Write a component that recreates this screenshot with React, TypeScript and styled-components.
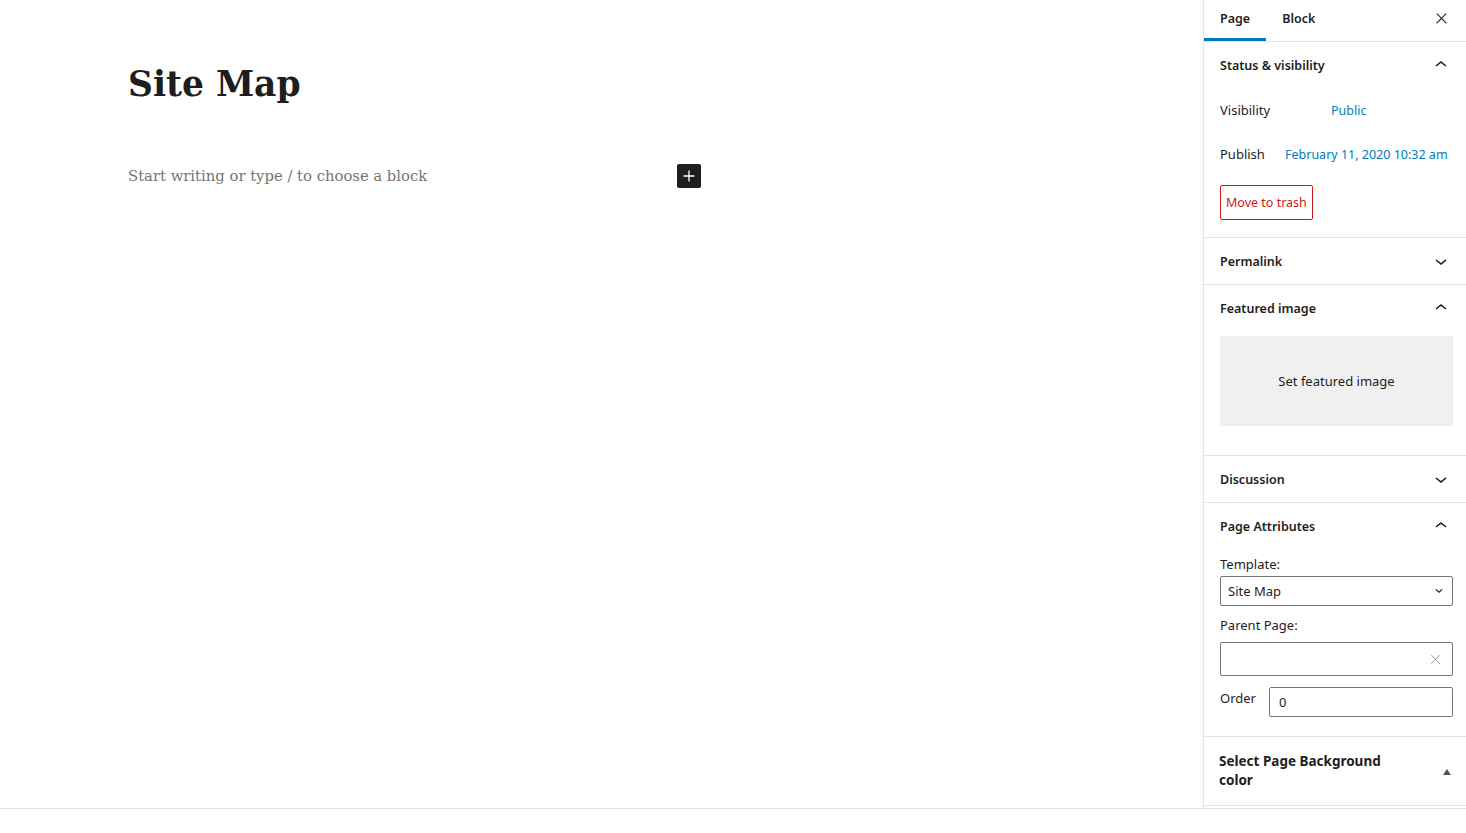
import React from 'react';
import styled, { createGlobalStyle } from 'styled-components';

const GlobalStyle = createGlobalStyle`
  html, body {
    margin: 0;
    padding: 0;
    background: #fff;
    color: #1e1e1e;
  }
  * { box-sizing: border-box; }
`;

const uiFont = `"Noto Sans", "Open Sans", sans-serif`;
const serifFont = `"DejaVu Serif", "Liberation Serif", serif`;

const ChevronUp = () => (
  <svg width="24" height="24" viewBox="0 0 24 24">
    <path d="M6.5 12.4L12 8l5.5 4.4-.9 1.2L12 10l-4.6 3.6-.9-1.2z" fill="#1e1e1e" />
  </svg>
);

const ChevronDown = () => (
  <svg width="24" height="24" viewBox="0 0 24 24">
    <path d="M17.5 11.6L12 16l-5.5-4.4.9-1.2L12 14l4.6-3.7.9 1.3z" fill="#1e1e1e" />
  </svg>
);

const CloseIcon = ({ size = 24, color = '#1e1e1e' }: { size?: number; color?: string }) => (
  <svg width={size} height={size} viewBox="0 0 24 24">
    <path
      d="M13 11.8l6.1-6.3-1-1-6.1 6.2-6.1-6.2-1 1 6.1 6.3-6.5 6.7 1 1 6.5-6.6 6.5 6.6 1-1z"
      fill={color}
    />
  </svg>
);

function App() {
  return (
    <>
      <GlobalStyle />
      <Layout>
        <Editor>
          <Column>
            <Title>Site Map</Title>
            <BlockRow>
              <Placeholder>Start writing or type / to choose a block</Placeholder>
              <InserterButton aria-label="Add block">
                <svg width="16" height="16" viewBox="0 0 16 16">
                  <path d="M7.35 2.5h1.3v4.85h4.85v1.3H8.65v4.85h-1.3V8.65H2.5v-1.3h4.85z" fill="#fff" />
                </svg>
              </InserterButton>
            </BlockRow>
          </Column>
        </Editor>

        <Sidebar>
          <Tabs>
            <Tab $active>Page</Tab>
            <Tab>Block</Tab>
            <CloseButton aria-label="Close settings">
              <CloseIcon size={17} />
            </CloseButton>
          </Tabs>

          <Panel>
            <PanelHeader>
              <span>Status &amp; visibility</span>
              <ChevronUp />
            </PanelHeader>
            <PanelBody $bottom={17}>
              <InfoRow>
                <InfoLabel $width={111}>Visibility</InfoLabel>
                <InfoLink>Public</InfoLink>
              </InfoRow>
              <InfoRow>
                <InfoLabel $width={65}>Publish</InfoLabel>
                <InfoLink>February 11, 2020 10:32 am</InfoLink>
              </InfoRow>
              <TrashButton>Move to trash</TrashButton>
            </PanelBody>
          </Panel>

          <Panel>
            <PanelHeader>
              <span>Permalink</span>
              <ChevronDown />
            </PanelHeader>
          </Panel>

          <Panel>
            <PanelHeader>
              <span>Featured image</span>
              <ChevronUp />
            </PanelHeader>
            <PanelBody $bottom={29}>
              <FeaturedBox>Set featured image</FeaturedBox>
            </PanelBody>
          </Panel>

          <Panel>
            <PanelHeader>
              <span>Discussion</span>
              <ChevronDown />
            </PanelHeader>
          </Panel>

          <Panel>
            <PanelHeader>
              <span>Page Attributes</span>
              <ChevronUp />
            </PanelHeader>
            <PanelBody $bottom={19}>
              <FieldLabel $top={6} $bottom={3}>Template:</FieldLabel>
              <SelectBox>
                <span>Site Map</span>
                <svg width="10" height="10" viewBox="0 0 10 10">
                  <path d="M1.8 3.4L5 6.3l3.2-2.9" stroke="#1e1e1e" strokeWidth="1.2" fill="none" />
                </svg>
              </SelectBox>
              <FieldLabel $top={10} $bottom={8}>Parent Page:</FieldLabel>
              <ComboBox>
                <CloseIcon size={15} color="#a7aaad" />
              </ComboBox>
              <OrderRow>
                <FieldLabel $top={2}>Order</FieldLabel>
                <NumberBox>0</NumberBox>
              </OrderRow>
            </PanelBody>
          </Panel>

          <Panel>
            <BigHeader>
              <BigTitle>Select Page Background color</BigTitle>
              <Triangle />
            </BigHeader>
          </Panel>
        </Sidebar>
      </Layout>
    </>
  );
}

const Layout = styled.div`
  display: flex;
  height: 809px;
  border-bottom: 1px solid #e2e4e7;
`;

const Editor = styled.main`
  flex: 1;
  padding: 54px 0 0 128px;
`;

const Column = styled.div`
  width: 573px;
`;

const Title = styled.h1`
  margin: 0;
  font-family: ${serifFont};
  font-weight: 700;
  font-size: 34.5px;
  line-height: 60px;
  color: #1e1e1e;
`;

const BlockRow = styled.div`
  display: flex;
  align-items: center;
  justify-content: space-between;
  margin-top: 50px;
`;

const Placeholder = styled.p`
  margin: 0;
  font-family: ${serifFont};
  font-size: 14.8px;
  line-height: 24px;
  color: #757575;
`;

const InserterButton = styled.button`
  width: 24px;
  height: 24px;
  padding: 0;
  border: 0;
  border-radius: 2px;
  background: #1e1e1e;
  display: flex;
  align-items: center;
  justify-content: center;
`;

const Sidebar = styled.aside`
  width: 263px;
  border-left: 1px solid #e2e4e7;
  font-family: ${uiFont};
  font-size: 13px;
  color: #1e1e1e;
  display: flex;
  flex-direction: column;
`;

const Tabs = styled.div`
  display: flex;
  align-items: stretch;
  height: 42px;
  border-bottom: 1px solid #e2e4e7;
`;

const Tab = styled.div<{ $active?: boolean }>`
  display: flex;
  align-items: center;
  padding: 0 16px 5px;
  font-weight: 600;
  font-size: 12.5px;
  box-shadow: ${(p) => (p.$active ? 'inset 0 -3px 0 #007cba' : 'none')};
`;

const CloseButton = styled.button`
  margin-left: auto;
  margin-right: 16px;
  padding: 0 0 5px;
  border: 0;
  background: none;
  display: flex;
  align-items: center;
`;

const Panel = styled.section`
  border-bottom: 1px solid #e2e4e7;
`;

const PanelHeader = styled.div`
  display: flex;
  align-items: center;
  justify-content: space-between;
  height: 46px;
  padding: 0 13px 0 16px;
  font-weight: 600;
  font-size: 12.5px;
`;

const PanelBody = styled.div<{ $bottom?: number }>`
  padding: 0 13px ${(p) => p.$bottom ?? 16}px 16px;
`;

const InfoRow = styled.div`
  display: flex;
  align-items: center;
  height: 44px;
  white-space: nowrap;
`;

const InfoLabel = styled.span<{ $width: number }>`
  width: ${(p) => p.$width}px;
  flex-shrink: 0;
`;

const InfoLink = styled.span`
  color: #007cba;
  font-size: 12.5px;
`;

const TrashButton = styled.button`
  margin-top: 9px;
  height: 35px;
  padding: 0 5px;
  background: #fff;
  border: 1px solid #cc1818;
  border-radius: 2px;
  color: #cc1818;
  font-family: ${uiFont};
  font-size: 12.5px;
`;

const FeaturedBox = styled.div`
  height: 90px;
  margin-top: 5px;
  background: #f0f0f0;
  display: flex;
  align-items: center;
  justify-content: center;
`;

const FieldLabel = styled.div<{ $top?: number; $bottom?: number }>`
  margin-top: ${(p) => p.$top ?? 0}px;
  margin-bottom: ${(p) => p.$bottom ?? 0}px;
  line-height: 18px;
`;

const SelectBox = styled.div`
  height: 30px;
  border: 1px solid #757575;
  border-radius: 2px;
  display: flex;
  align-items: center;
  justify-content: space-between;
  padding: 0 8px 0 7px;
`;

const ComboBox = styled.div`
  height: 34px;
  border: 1px solid #757575;
  border-radius: 2px;
  display: flex;
  align-items: center;
  justify-content: flex-end;
  padding-right: 9px;
`;

const OrderRow = styled.div`
  display: flex;
  align-items: flex-start;
  gap: 13px;
  margin-top: 11px;
`;

const NumberBox = styled.div`
  flex: 1;
  height: 30px;
  border: 1px solid #757575;
  border-radius: 2px;
  display: flex;
  align-items: center;
  padding-left: 9px;
`;

const BigHeader = styled.div`
  display: flex;
  align-items: center;
  justify-content: space-between;
  height: 68px;
  padding: 0 15px 0 15px;
`;

const BigTitle = styled.span`
  width: 185px;
  font-weight: 700;
  font-size: 13.5px;
  line-height: 19px;
`;

const Triangle = styled.span`
  width: 0;
  height: 0;
  border-left: 4px solid transparent;
  border-right: 4px solid transparent;
  border-bottom: 6px solid #555;
  margin-top: 2px;
`;

export default App;
